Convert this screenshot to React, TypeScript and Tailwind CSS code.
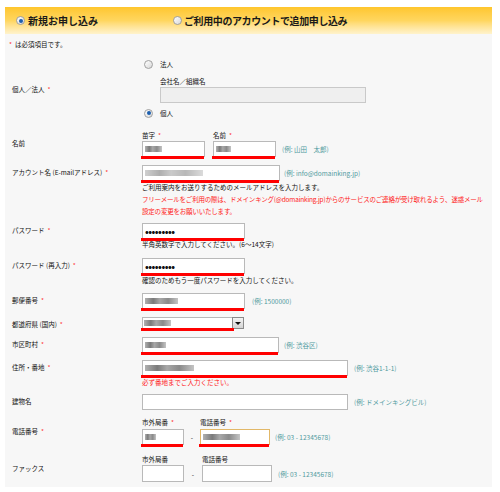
import React from 'react';

const hint = 'text-[#4f9a9e] whitespace-nowrap';

function Req() {
    return <span className="text-[#ff3333] ml-[3px]">*</span>;
}

function Radio({ on }: { on?: boolean }) {
    return (
        <span className="w-[9px] h-[9px] rounded-full border border-[#a0a0a0] bg-gradient-to-br from-[#ffffff] to-[#d8d8d8] flex items-center justify-center shrink-0">
            {on && <span className="w-[4px] h-[4px] rounded-full bg-[#1d5fae]" />}
        </span>
    );
}

// blurred value placeholder (the screenshot has the values pixelated)
function Blur({ className }: { className: string }) {
    return (
        <span
            className={
                'block h-[6px] blur-[0.7px] bg-[linear-gradient(90deg,#b0b0b0,#7a7a7a_25%,#a8a8a8_45%,#8a8a8a_70%,#c4c4c4)] ' +
                className
            }
        />
    );
}

function Box({
    className,
    line = true,
    children,
    border = 'border-[#b9b9b9]',
}: {
    className: string;
    line?: boolean;
    children?: React.ReactNode;
    border?: string;
}) {
    return (
        <div className={'relative shrink-0 h-[16px] bg-white border flex items-center px-[2px] ' + border + ' ' + className}>
            {children}
            {line && <span className="absolute left-[-2px] right-0 bottom-[-3px] h-[3px] bg-[#ff0000]" />}
        </div>
    );
}

function Row({ label, children, className = '', center = false }: { label: React.ReactNode; children: React.ReactNode; className?: string; center?: boolean }) {
    return (
        <div className={'flex ' + (center ? 'items-center ' : 'items-start ') + className}>
            <div className={'w-[130px] shrink-0 whitespace-nowrap ' + (center ? '' : 'pt-[1px]')}>{label}</div>
            <div className="flex-1">{children}</div>
        </div>
    );
}

export default function App() {
    return (
        <div className="min-h-screen bg-white pt-[7px] pl-[5px] font-['Noto_Sans_CJK_JP',sans-serif]">
            <div className="w-[487px]">
                {/* tabs */}
                <div className="h-[27px] bg-gradient-to-b from-[#ffc62a] via-[#ffd65e] to-[#fff3cc] flex items-center text-[10px] font-bold text-[#1a1a1a] leading-none">
                    <div className="w-[168px] pl-[11px] flex items-center gap-[3px]">
                        <Radio on />
                        <span>新規お申し込み</span>
                    </div>
                    <div className="flex items-center gap-[2px]">
                        <Radio />
                        <span className="tracking-[-0.4px]">ご利用中のアカウントで追加申し込み</span>
                    </div>
                </div>

                {/* form body */}
                <div className="bg-[#f7f7f7] pl-[7px] pb-[5px] text-[6.5px] leading-[12px] text-[#111]">
                    <div className="pt-[4px] -ml-[3px] h-[16px]">
                        <span className="text-[#ff3333] mr-[3px]">*</span>は必須項目です。
                    </div>

                    <Row center className="mt-[8px]" label={<>個人／法人<Req /></>}>
                        <div className="h-[12px] flex items-center gap-[7px] pl-[2px]">
                            <Radio />
                            <span>法人</span>
                        </div>
                        <div className="mt-[5px] pl-[18px]">会社名／組織名</div>
                        <div className="ml-[18px] w-[206px] h-[16px] border border-[#c9c9c9] bg-[#efefef]" />
                        <div className="mt-[4px] h-[12px] flex items-center gap-[7px] pl-[2px]">
                            <Radio on />
                            <span>個人</span>
                        </div>
                    </Row>

                    <Row center className="mt-[10px]" label="名前">
                        <div className="flex items-end">
                            <div className="w-[71px]">
                                <div className="h-[12px]">苗字<Req /></div>
                                <Box className="w-[63px]"><Blur className="w-[17px]" /></Box>
                            </div>
                            <div className="w-[63px]">
                                <div className="h-[12px]">名前<Req /></div>
                                <Box className="w-[63px]"><Blur className="w-[15px]" /></Box>
                            </div>
                            <div className={'h-[16px] flex items-center ml-[6px] ' + hint}>(例: 山田　太郎)</div>
                        </div>
                    </Row>

                    <Row className="mt-[8px]" label={<>アカウント名 (E-mailアドレス)<Req /></>}>
                        <div className="flex items-center">
                            <Box className="w-[138px]"><Blur className="w-[58px] opacity-60" /></Box>
                            <span className={'ml-[4px] ' + hint}>(例: info@domainking.jp)</span>
                        </div>
                        <div className="whitespace-nowrap">ご利用案内をお送りするためのメールアドレスを入力します。</div>
                        <div className="whitespace-nowrap text-[#ff2020] tracking-[-0.2px]">
                            フリーメールをご利用の際は、ドメインキング(@domainking.jp)からのサービスのご連絡が受け取れるよう、迷惑メール
                            <br />
                            設定の変更をお願いいたします。
                        </div>
                    </Row>

                    <Row className="mt-[6px]" label={<>パスワード<Req /></>}>
                        <Box className="w-[103px]">
                            <span className="text-[10px] font-bold leading-none tracking-[-0.5px] text-[#111]">•••••••••</span>
                        </Box>
                        <div className="mt-[-1px] whitespace-nowrap">半角英数字で入力してください。(6～14文字)</div>
                    </Row>

                    <Row className="mt-[8px]" label={<>パスワード (再入力)<Req /></>}>
                        <Box className="w-[103px]">
                            <span className="text-[10px] font-bold leading-none tracking-[-0.5px] text-[#111]">•••••••••</span>
                        </Box>
                        <div className="whitespace-nowrap">確認のためもう一度パスワードを入力してください。</div>
                    </Row>

                    <Row className="mt-[7px]" label={<>郵便番号<Req /></>}>
                        <div className="flex items-center">
                            <Box className="w-[103px]"><Blur className="w-[33px]" /></Box>
                            <span className={'ml-[7px] ' + hint}>(例: 1500000)</span>
                        </div>
                    </Row>

                    <Row className="mt-[8px]" label={<>都道府県 (国内)<Req /></>}>
                        <div className="relative w-[102px] h-[12px] bg-white border border-[#b9b9b9] flex items-center px-[1px]">
                            <Blur className="w-[27px]" />
                            <span className="absolute right-[-1px] top-[-1px] w-[12px] h-[12px] border border-[#8a8a8a] bg-gradient-to-b from-[#f4f4f4] to-[#d4d4d4] flex items-center justify-center">
                                <span className="w-0 h-0 border-l-[3px] border-r-[3px] border-t-[3px] border-l-transparent border-r-transparent border-t-[#111]" />
                            </span>
                            <span className="absolute left-[-2px] w-[93px] bottom-[-3px] h-[3px] bg-[#ff0000]" />
                        </div>
                    </Row>

                    <Row className="mt-[7px]" label={<>市区町村<Req /></>}>
                        <div className="flex items-center">
                            <Box className="w-[137px]"><Blur className="w-[21px]" /></Box>
                            <span className={'ml-[5px] ' + hint}>(例: 渋谷区)</span>
                        </div>
                    </Row>

                    <Row className="mt-[7px]" label={<>住所・番地<Req /></>}>
                        <div className="flex items-center">
                            <Box className="w-[206px]"><Blur className="w-[49px]" /></Box>
                            <span className={'ml-[6px] ' + hint}>(例: 渋谷1-1-1)</span>
                        </div>
                        <div className="text-[#ff2020] whitespace-nowrap">必ず番地までご入力ください。</div>
                    </Row>

                    <Row className="mt-[6px]" label="建物名">
                        <div className="flex items-center">
                            <Box className="w-[206px]" line={false} />
                            <span className={'ml-[6px] ' + hint}>(例: ドメインキングビル)</span>
                        </div>
                    </Row>

                    <Row center className="mt-[6px]" label={<>電話番号<Req /></>}>
                        <div className="flex items-end">
                            <div>
                                <div className="h-[13px]">市外局番<Req /></div>
                                <Box className="w-[42px]"><Blur className="w-[11px]" /></Box>
                            </div>
                            <div className="w-[16px] h-[16px] flex items-center justify-center">-</div>
                            <div>
                                <div className="h-[13px]">電話番号<Req /></div>
                                <Box className="w-[70px]" border="border-[#e2b868]"><Blur className="w-[37px]" /></Box>
                            </div>
                            <div className={'h-[16px] flex items-center ml-[5px] ' + hint}>(例: 03 - 12345678)</div>
                        </div>
                    </Row>

                    <Row center className="mt-[8px]" label="ファックス">
                        <div className="flex items-end">
                            <div>
                                <div className="h-[12px]">市外局番</div>
                                <Box className="w-[42px] h-[17px]" line={false} />
                            </div>
                            <div className="w-[18px] h-[16px] flex items-center justify-center">-</div>
                            <div>
                                <div className="h-[12px]">電話番号</div>
                                <Box className="w-[70px] h-[17px]" line={false} />
                            </div>
                            <div className={'h-[16px] flex items-center ml-[6px] ' + hint}>(例: 03 - 12345678)</div>
                        </div>
                    </Row>
                </div>
            </div>
        </div>
    );
}
